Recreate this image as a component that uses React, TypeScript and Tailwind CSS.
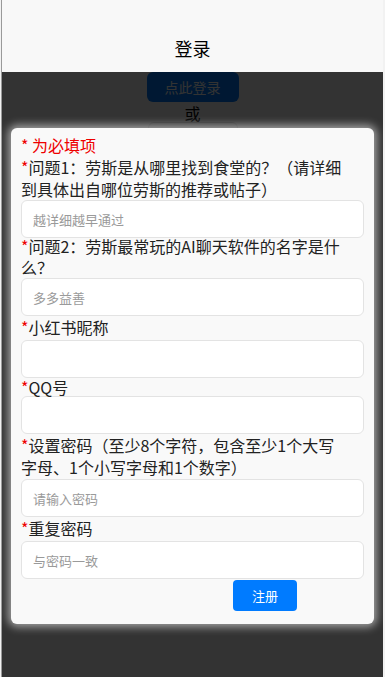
const font = { fontFamily: '"Noto Sans CJK SC", "Liberation Sans", sans-serif' }

function Label({ children, className = '' }: { children: React.ReactNode; className?: string }) {
  return (
    <div className={`text-[16px] text-[#222] ${className}`}>
      <span className="text-[#e00]">*</span>
      {children}
    </div>
  )
}

function Field({ placeholder = '', className = '' }: { placeholder?: string; className?: string }) {
  return (
    <input
      type="text"
      placeholder={placeholder}
      className={`block w-full h-[38px] rounded-[6px] border border-[#e3e3e3] bg-white px-[11px] text-[13px] text-[#333] placeholder-[#9a9a9a] outline-none ${className}`}
    />
  )
}

export default function App() {
  return (
    <div className="relative h-[677px] overflow-hidden bg-[#f2f2f2] pl-[1px] pr-[2px]" style={font}>
      <div className="relative h-full border-l border-[#9a9a9a] bg-white">
        {/* Header */}
        <div className="relative z-20 h-[72px] bg-[#f8f8f8] pt-[37px] text-center text-[18px] leading-[22px] text-black">
          登录
        </div>

        {/* Page behind the overlay */}
        <div className="flex flex-col items-center">
          <button className="h-[30px] w-[92px] rounded-[6px] bg-[#007bff] text-[14px] text-white">点此登录</button>
          <div className="text-[16px] leading-[22px] text-black">或</div>
          <button className="-mt-[2px] h-[30px] w-[90px] rounded-[6px] border border-[#ccc] bg-white text-[14px] text-[#333]">注册账号</button>
        </div>

        {/* Overlay */}
        <div className="absolute inset-x-0 top-[72px] bottom-0 z-10 bg-black/80" />

        {/* Register dialog */}
        <div className="absolute left-[9px] top-[128px] z-30 w-[363px] rounded-[6px] bg-[#f9f9f9] px-[10px] pt-[6px] pb-[13px] shadow-[0_0_9px_3px_rgba(255,255,255,0.55)]">
          <div className="text-[16px] leading-[22px] text-[#e00]">* 为必填项</div>
          <Label className="pr-[9px] leading-[22px]">问题1：劳斯是从哪里找到食堂的？（请详细到具体出自哪位劳斯的推荐或帖子）</Label>
          <Field placeholder="越详细越早通过" className="h-[37px]" />
          <Label className="-mt-[2px] leading-[21px]">问题2：劳斯最常玩的AI聊天软件的名字是什么？</Label>
          <Field placeholder="多多益善" className="h-[37px]" />
          <Label className="leading-[22px]">小红书昵称</Label>
          <Field className="mt-[2px]" />
          <Label className="leading-[18px]">QQ号</Label>
          <Field />
          <Label className="pr-[14px] leading-[22px]">设置密码（至少8个字符，包含至少1个大写字母、1个小写字母和1个数字）</Label>
          <Field placeholder="请输入密码" className="mt-[1px]" />
          <Label className="leading-[22px]">重复密码</Label>
          <Field placeholder="与密码一致" className="mt-[2px]" />
          <button className="ml-[212px] mt-[1px] block h-[31px] w-[64px] rounded-[4px] bg-[#007bff] text-[13px] text-white">
            注册
          </button>
        </div>
      </div>
    </div>
  )
}
